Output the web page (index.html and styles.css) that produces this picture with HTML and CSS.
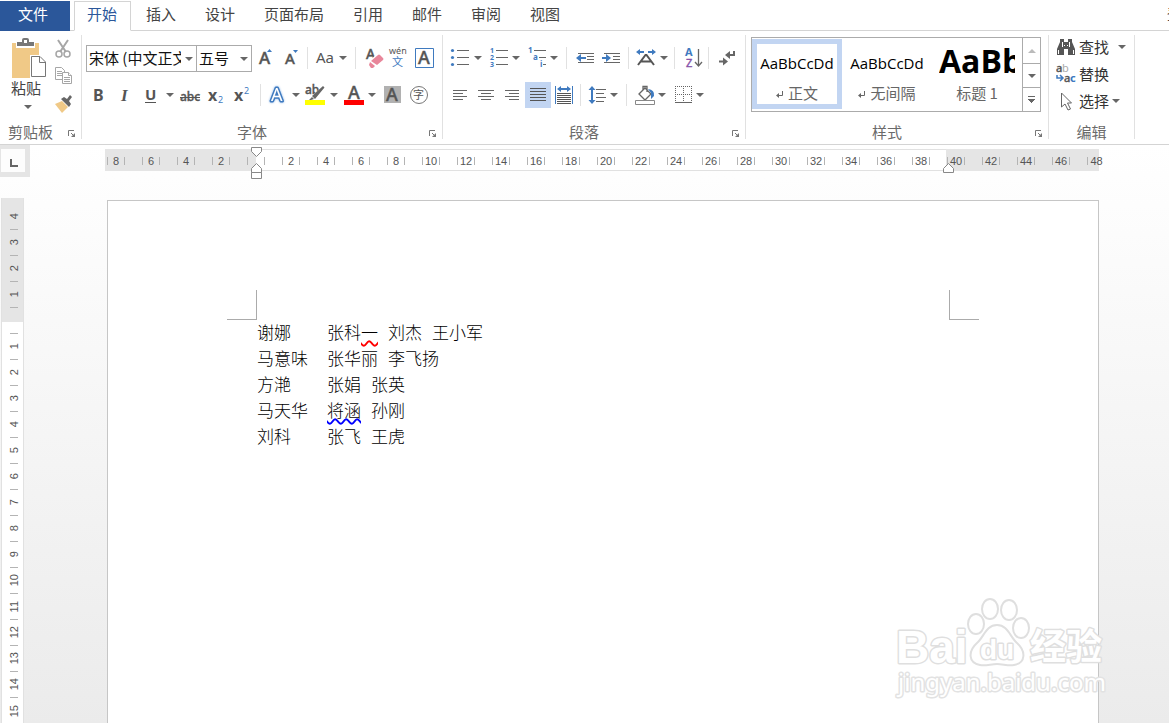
FILE: index.html
```html
<!DOCTYPE html>
<html lang="zh-CN">
<head>
<meta charset="utf-8">
<title>文档</title>
<link rel="stylesheet" href="styles.css">
</head>
<body>
<nav class="tabs" aria-label="功能区选项卡">
  <button class="tab tab-file">文件</button>
  <button class="tab tab-active">开始</button>
  <button class="tab">插入</button>
  <button class="tab">设计</button>
  <button class="tab">页面布局</button>
  <button class="tab">引用</button>
  <button class="tab">邮件</button>
  <button class="tab">审阅</button>
  <button class="tab">视图</button>
  <button class="sign-in">登录</button>
</nav>

<header class="ribbon">
  <section class="group group-clipboard" aria-label="剪贴板">
    <div class="clipboard">
      <button class="paste">
        <svg width="36" height="40" viewBox="0 0 36 40"><path fill="#f0c987" d="M2 5h27v35H2z"/><path fill="#fff" d="M6 3h19v7H6z"/><path fill="#777" d="M7 4h5V2q0-2 2-2h3q2 0 2 2v2h5v4H7z"/><path fill="#fff" d="M14 2h3v3h-3z"/><path fill="#fff" d="M20 17h12l4 5v18H20z"/><path fill="#fff" stroke="#777" d="M21.500 18.500h8.500l5.500 5.500v14.500h-14zM29.500 18.500v6h6"/></svg>
        <span>粘贴</span>
        <i class="caret"></i>
      </button>
      <div class="mini">
        <button class="tool" aria-label="剪切"><svg width="26" height="26" viewBox="0 0 26 26"><g fill="none" stroke="#a6a6a6"><path stroke-width="2" d="M8 5l8 12M18 5l-8 12"/><circle cx="9" cy="19" r="3" stroke-width="1.500"/><circle cx="17" cy="19" r="3" stroke-width="1.500"/></g></svg></button>
        <button class="tool" aria-label="复制"><svg width="26" height="26" viewBox="0 0 26 26"><g fill="#fff" stroke="#a6a6a6"><path d="M5.500 4.500h6l3 3v9h-9z"/><path d="M7 8.500h5M7 10.500h5M7 12.500h5"/><path d="M12.500 9.500h6l3 3v8h-9z"/><path d="M18.500 9.500v3h3M14 14.500h6M14 16.500h6M14 18.500h6"/></g></svg></button>
        <button class="tool" aria-label="格式刷"><svg width="26" height="26" viewBox="0 0 26 26"><path fill="#f0c987" d="M5 13l7-3 6 6-6 6z"/><path fill="#666" d="M11 8l3-2 3 2 3-4 2 2-3 4 2 3-2 3z"/></svg></button>
      </div>
    </div>
    <footer class="group-foot"><span>剪贴板</span><button class="launcher" aria-label="剪贴板设置"><svg width="8" height="8" viewBox="0 0 8 8"><path fill="none" stroke="#777" d="M.5 6V.5H6M3 3l3 3"/><path fill="#777" d="M7 3v4H3z"/></svg></button></footer>
  </section>

  <section class="group group-font" aria-label="字体">
    <div class="rows">
      <div class="row">
        <label class="combo combo-font"><select aria-label="字体"><option>宋体 (中文正文)</option></select></label>
        <label class="combo combo-size"><select aria-label="字号"><option>五号</option></select></label>
        <button class="tool" aria-label="增大字号"><svg width="26" height="26" viewBox="0 0 26 26"><text class="glyph g17" x="7" y="19">A</text><path fill="#3f7abf" d="M15 7l2.500-3L20 7z"/></svg></button>
        <button class="tool" aria-label="减小字号"><svg width="26" height="26" viewBox="0 0 26 26"><text class="glyph g15" x="7" y="19">A</text><path fill="#3f7abf" d="M15 5l2.500 3L20 5z"/></svg></button>
        <i class="sep sep-s"></i>
        <button class="tool" aria-label="更改大小写"><svg width="26" height="26" viewBox="0 0 26 26"><text class="glyph g15 thin" x="6" y="18">Aa</text></svg></button><button class="drop" aria-label="大小写选项"><i class="caret"></i></button>
        <i class="sep"></i>
        <button class="tool" aria-label="清除格式"><svg width="26" height="26" viewBox="0 0 26 26"><text class="glyph g14" x="6" y="14">A</text><path fill="#fff" d="M8 17L18 8l5 5-8 11z"/><path fill="#e8869a" d="M11 16l7-6q1-1 2 0l3 3q1 1 0 2l-6 5z"/><path fill="#e8869a" d="M10 17l5 4-2 2h-2l-2-3z"/></svg></button>
        <button class="tool tool-n" aria-label="拼音指南"><svg width="24" height="26" viewBox="0 0 24 26"><text class="glyph g9 thin" x="3" y="9">wén</text><text class="cjk g11" fill="#3f7abf" x="6" y="21">文</text></svg></button>
        <button class="tool" aria-label="字符边框"><svg width="26" height="26" viewBox="0 0 26 26"><path fill="#fff" stroke="#3f7abf" d="M5.500 3.500h18v19h-18z"/><text class="glyph g18" x="8" y="19">A</text></svg></button>
      </div>
      <div class="row">
        <button class="tool" aria-label="加粗"><svg width="26" height="26" viewBox="0 0 26 26"><text class="glyph g16 bold" x="8" y="19">B</text></svg></button>
        <button class="tool" aria-label="倾斜"><svg width="26" height="26" viewBox="0 0 26 26"><text class="serif g17" x="10" y="19">I</text></svg></button>
        <button class="tool" aria-label="下划线"><svg width="26" height="26" viewBox="0 0 26 26"><text class="glyph g15 bold" x="8" y="18">U</text><path stroke="#555" d="M8 20.500h11"/></svg></button><button class="drop" aria-label="下划线选项"><i class="caret"></i></button>
        <button class="tool" aria-label="删除线"><svg width="26" height="26" viewBox="0 0 26 26"><text class="glyph g12" x="3" y="19">abc</text><path stroke="#555" d="M3 15.500h20"/></svg></button>
        <button class="tool" aria-label="下标"><svg width="26" height="26" viewBox="0 0 26 26"><text class="glyph g16 bold" x="5" y="19">x</text><text class="blue g9" x="15" y="21">2</text></svg></button>
        <button class="tool" aria-label="上标"><svg width="26" height="26" viewBox="0 0 26 26"><text class="glyph g16 bold" x="5" y="19">x</text><text class="blue g9" x="15" y="12">2</text></svg></button>
        <i class="sep"></i>
        <button class="tool tool-n" aria-label="文本效果"><svg width="24" height="26" viewBox="0 0 24 26"><text class="outline g18" x="6" y="19">A</text></svg></button><button class="drop" aria-label="文本效果选项"><i class="caret"></i></button>
        <button class="tool tool-n" aria-label="突出显示"><svg width="24" height="26" viewBox="0 0 24 26"><text class="glyph g12" x="2" y="12">ab</text><path fill="#fff" d="M7 19l3-6L21 3l2 4-8 12z"/><path fill="#666" d="M9 14L20 4l1.500 1.500L12 17zM6 18l3-3 2 2-3 1z"/><path fill="#ff0" d="M2 18h20v5H2z"/></svg></button><button class="drop" aria-label="突出显示颜色"><i class="caret"></i></button>
        <button class="tool tool-n" aria-label="字体颜色"><svg width="24" height="26" viewBox="0 0 24 26"><text class="glyph g18" x="7" y="17">A</text><path fill="red" d="M3 18h20v5H3z"/></svg></button><button class="drop" aria-label="字体颜色选项"><i class="caret"></i></button>
        <button class="tool" aria-label="字符底纹"><svg width="26" height="26" viewBox="0 0 26 26"><path fill="#b1b1b1" d="M5 4h17v17H5z"/><text class="glyph g18" x="7" y="19">A</text></svg></button>
        <button class="tool" aria-label="带圈字符"><svg width="26" height="26" viewBox="0 0 26 26"><circle cx="14" cy="13" r="8.500" fill="none" stroke="#777"/><text class="cjk g11" fill="#555" x="8" y="17">字</text></svg></button>
      </div>
    </div>
    <footer class="group-foot"><span>字体</span><button class="launcher" aria-label="字体设置"><svg width="8" height="8" viewBox="0 0 8 8"><path fill="none" stroke="#777" d="M.5 6V.5H6M3 3l3 3"/><path fill="#777" d="M7 3v4H3z"/></svg></button></footer>
  </section>

  <section class="group group-para" aria-label="段落">
    <div class="rows">
      <div class="row">
        <button class="tool tool-n" aria-label="项目符号"><svg width="24" height="26" viewBox="0 0 24 26"><g fill="#3f7abf"><circle cx="5.500" cy="5.500" r="1.600"/><circle cx="5.500" cy="12.500" r="1.600"/><circle cx="5.500" cy="19.500" r="1.600"/></g><path stroke="#666" d="M10 5.500h12M10 12.500h12M10 19.500h12"/></svg></button><button class="drop" aria-label="项目符号选项"><i class="caret"></i></button>
        <button class="tool tool-n" aria-label="编号"><svg width="24" height="26" viewBox="0 0 24 26"><g class="blue g7 bold"><text x="5" y="8">1</text><text x="5" y="15">2</text><text x="5" y="22">3</text></g><path stroke="#666" d="M11 5.500h12M11 12.500h12M11 19.500h12"/></svg></button><button class="drop" aria-label="编号选项"><i class="caret"></i></button>
        <button class="tool tool-n" aria-label="多级列表"><svg width="24" height="26" viewBox="0 0 24 26"><g class="blue g8 bold"><text x="5" y="8">1</text><text x="10" y="15">a</text><text x="17" y="22">i</text></g><path stroke="#666" d="M11 5.500h12M16 12.500h7M20 19.500h3"/></svg></button><button class="drop" aria-label="多级列表选项"><i class="caret"></i></button>
        <i class="sep"></i>
        <button class="tool" aria-label="减少缩进量"><svg width="26" height="26" viewBox="0 0 26 26"><path stroke="#666" d="M7 8.500h16M16 11.500h7M16 14.500h7M7 17.500h16"/><path fill="#3f7abf" d="M5 13l5-4v3h5v2h-5v3z"/></svg></button>
        <button class="tool" aria-label="增加缩进量"><svg width="26" height="26" viewBox="0 0 26 26"><path stroke="#666" d="M7 8.500h16M16 11.500h7M16 14.500h7M7 17.500h16"/><path fill="#3f7abf" d="M14 13L9 9v3H5v2h4v3z"/></svg></button>
        <i class="sep"></i>
        <button class="tool tool-n" aria-label="中文版式"><svg width="24" height="26" viewBox="0 0 24 26"><path fill="#3f7abf" d="M3 7l4-3v2h4v2H7v2zM23 7l-4-3v2h-4v2h4v2z"/><path fill="none" stroke="#555" stroke-width="2" d="M5 20l7.500-10h1L21 20M8 16.500h10"/></svg></button><button class="drop" aria-label="中文版式选项"><i class="caret"></i></button>
        <i class="sep sep-s"></i>
        <button class="tool" aria-label="排序"><svg width="26" height="26" viewBox="0 0 26 26"><text class="blue g11 bold" x="8" y="11">A</text><text class="g11" fill="#8651a8" stroke="#8651a8" stroke-width=".4" x="9" y="22">Z</text><path fill="none" stroke="#666" stroke-width="1.300" d="M21.500 4v17M18 17l3.500 4 3.500-4"/></svg></button>
        <i class="sep"></i>
        <button class="tool" aria-label="显示编辑标记"><svg width="26" height="26" viewBox="0 0 26 26"><path fill="none" stroke="#666" stroke-width="2" d="M21 6v4h-5M6 16.500h5"/><path fill="#666" d="M12 10l5-4v8zM15 16.500l-5-4v8z"/></svg></button>
      </div>
      <div class="row">
        <button class="tool" aria-label="左对齐"><svg width="26" height="26" viewBox="0 0 26 26"><path stroke="#666" d="M6 8.500h14M6 11.500h10M6 14.500h14M6 17.500h10"/></svg></button>
        <button class="tool" aria-label="居中"><svg width="26" height="26" viewBox="0 0 26 26"><path stroke="#666" d="M5 8.500h16M8 11.500h10M5 14.500h16M8 17.500h10"/></svg></button>
        <button class="tool" aria-label="右对齐"><svg width="26" height="26" viewBox="0 0 26 26"><path stroke="#666" d="M6 8.500h14M10 11.500h10M6 14.500h14M10 17.500h10"/></svg></button>
        <button class="tool tool-on" aria-label="两端对齐" aria-pressed="true"><svg width="26" height="26" viewBox="0 0 26 26"><path stroke="#555" d="M5 6.500h16M5 9.500h16M5 12.500h16M5 15.500h16M5 18.500h16"/></svg></button>
        <button class="tool" aria-label="分散对齐"><svg width="26" height="26" viewBox="0 0 26 26"><path stroke="#3f7abf" d="M4.500 4v18M21.500 4v18"/><path fill="#3f7abf" d="M6 7l4-3v2h6V4l4 3-4 3V8h-6v2z"/><path stroke="#555" d="M6 11.500h14M6 13.500h14M6 15.500h14M6 17.500h14M6 19.500h14M6 21.500h14"/></svg></button>
        <i class="sep sep-s"></i>
        <button class="tool tool-n" aria-label="行距"><svg width="24" height="26" viewBox="0 0 24 26"><path fill="#3f7abf" d="M9 4l3.500 4H10v10h2.500L9 22l-3.500-4H8V8H5.500z"/><path stroke="#666" d="M13 7.500h10M13 11.500h8M13 15.500h10M13 19.500h8"/></svg></button><button class="drop" aria-label="行距选项"><i class="caret"></i></button>
        <i class="sep"></i>
        <button class="tool tool-n" aria-label="底纹"><svg width="24" height="26" viewBox="0 0 24 26"><path fill="#fff" stroke="#666" stroke-width="1.300" d="M8 12l6-6 6 6-6 6zM12 8V4.500h4V10"/><path fill="#3f7abf" d="M17 7q7 1 6 7l-3 3V11z"/><path fill="#fff" stroke="#888" d="M4.500 18.500h19v4h-19z"/></svg></button><button class="drop" aria-label="底纹颜色"><i class="caret"></i></button>
        <button class="tool tool-n" aria-label="边框"><svg width="24" height="26" viewBox="0 0 24 26"><path fill="none" stroke="#666" stroke-dasharray="1 1" d="M6 4.500h17M6 12.500h17M6.500 4v17M14.500 4v17M22.500 4v17"/><path stroke="#666" d="M6 20.500h17"/></svg></button><button class="drop" aria-label="边框选项"><i class="caret"></i></button>
      </div>
    </div>
    <footer class="group-foot"><span>段落</span><button class="launcher" aria-label="段落设置"><svg width="8" height="8" viewBox="0 0 8 8"><path fill="none" stroke="#777" d="M.5 6V.5H6M3 3l3 3"/><path fill="#777" d="M7 3v4H3z"/></svg></button></footer>
  </section>

  <section class="group group-styles" aria-label="样式">
    <div class="gallery">
      <button class="style style-on"><span class="sample">AaBbCcDd</span><span class="style-name"><svg width="8" height="8" viewBox="0 0 8 8"><path fill="none" stroke="#666" d="M6.500 0v4.500H2"/><path fill="#666" d="M0 4.500L3 2v5z"/></svg>正文</span></button>
      <button class="style"><span class="sample">AaBbCcDd</span><span class="style-name"><svg width="8" height="8" viewBox="0 0 8 8"><path fill="none" stroke="#666" d="M6.500 0v4.500H2"/><path fill="#666" d="M0 4.500L3 2v5z"/></svg>无间隔</span></button>
      <button class="style"><span class="sample sample-h1">AaBb</span><span class="style-name">标题 1</span></button>
      <div class="gallery-nav">
        <button aria-label="上一行" disabled><i class="caret caret-up"></i></button>
        <button aria-label="下一行"><i class="caret"></i></button>
        <button aria-label="其他"><i class="caret caret-more"></i></button>
      </div>
    </div>
    <footer class="group-foot"><span>样式</span><button class="launcher" aria-label="样式设置"><svg width="8" height="8" viewBox="0 0 8 8"><path fill="none" stroke="#777" d="M.5 6V.5H6M3 3l3 3"/><path fill="#777" d="M7 3v4H3z"/></svg></button></footer>
  </section>

  <section class="group group-edit" aria-label="编辑">
    <div class="edit-list">
      <button class="edit"><svg width="20" height="20" viewBox="0 0 20 20"><path fill="#555" d="M4 2h4v3h4V2h4v3l3 7v6h-7v-6H8v6H1v-6l3-7z"/><path stroke="#fff" d="M6.500 5v5M13.500 5v5M2.500 13v4M17.500 13v4M8 8.500h1M11 8.500h1"/></svg>查找<i class="caret caret-far"></i></button>
      <button class="edit"><svg width="20" height="20" viewBox="0 0 20 20"><text class="glyph g11" x="0" y="8">a</text><text class="g11" fill="#aaa" x="6" y="8">b</text><text class="glyph g11" x="8" y="18">a</text><text class="blue g11 bold" x="14" y="18">c</text><path fill="none" stroke="#3f7abf" stroke-width="1.500" d="M1 11v3h5M4 11l3 3-3 3"/></svg>替换</button>
      <button class="edit"><svg width="20" height="20" viewBox="0 0 20 20"><path fill="#fff" stroke="#666" d="M5.500 2v14l3.500-3 3 6 2.500-1-3-6h4z"/></svg>选择<i class="caret"></i></button>
    </div>
    <footer class="group-foot"><span>编辑</span></footer>
  </section>
</header>

<main class="workspace">
  <div class="corner"><button class="tab-stop" aria-label="制表符"><svg width="8" height="8" viewBox="0 0 8 8"><path fill="none" stroke="#666" stroke-width="2" d="M1 0v7h7"/></svg></button></div>
  <div class="ruler">
    <div class="ruler-bands"><i></i><i></i><i></i></div>
    <ol class="ruler-marks"><li>8</li><li>6</li><li>4</li><li>2</li><li></li><li>2</li><li>4</li><li>6</li><li>8</li><li>10</li><li>12</li><li>14</li><li>16</li><li>18</li><li>20</li><li>22</li><li>24</li><li>26</li><li>28</li><li>30</li><li>32</li><li>34</li><li>36</li><li>38</li><li>40</li><li>42</li><li>44</li><li>46</li><li class="last">48</li></ol>
    <svg class="indent-left" width="12" height="33" viewBox="0 0 12 33"><g fill="#fff" stroke="#888"><path d="M.5.500h10v4l-5 5-5-5zM.5 25.500v-4l5-5 5 5v4zM.5 25.500h10v6H.5z"/></g></svg>
    <svg class="indent-right" width="12" height="11" viewBox="0 0 12 11"><path fill="#fff" stroke="#888" d="M.5 9.500v-4l5-5 5 5v4z"/></svg>
  </div>
  <div class="vruler">
    <ol class="vmarks vmarks-margin"><li>4</li><li>3</li><li>2</li><li>1</li></ol>
    <ol class="vmarks"><li></li><li>1</li><li>2</li><li>3</li><li>4</li><li>5</li><li>6</li><li>7</li><li>8</li><li>9</li><li>10</li><li>11</li><li>12</li><li>13</li><li>14</li><li>15</li></ol>
  </div>
  <article class="page">
    <div class="crops"><i class="crop crop-l"></i><i class="crop crop-r"></i></div>
    <div class="text">
      <p><span class="lead">谢娜</span><span>张科<u class="spell">一</u></span><span>刘杰</span><span>王小军</span></p>
      <p><span class="lead">马意味</span><span>张华丽</span><span>李飞扬</span></p>
      <p><span class="lead">方滟</span><span>张娟</span><span>张英</span></p>
      <p><span class="lead">马天华</span><span><u class="grammar">将涵</u></span><span>孙刚</span></p>
      <p><span class="lead">刘科</span><span>张飞</span><span>王虎</span></p>
    </div>
  </article>
  <svg class="watermark" width="214" height="104" viewBox="0 0 214 104" role="img" aria-label="Baidu 经验">
    <g class="wm">
      <text class="wm-bai" x="1" y="65">Bai</text>
      <ellipse cx="81" cy="26" rx="8" ry="10"/>
      <ellipse cx="95" cy="11" rx="8" ry="10"/>
      <ellipse cx="114" cy="12" rx="8" ry="10"/>
      <ellipse cx="126" cy="30" rx="8" ry="10"/>
      <path d="M102 27c11 0 13 12 20 18 9 8 9 20-3 22-6 1-11-1-17-1s-11 2-17 1c-12-2-12-14-3-22 7-6 9-18 20-18z"/>
      <text class="wm-du" x="85" y="61">du</text>
      <text class="wm-jy" x="135" y="62">经验</text>
      <text class="wm-url" x="3" y="93">jingyan.baidu.com</text>
    </g>
  </svg>
</main>
</body>
</html>
```

FILE: styles.css
```css
* { box-sizing: border-box; }

body {
  margin: 0;
  min-height: 100vh;
  display: flex;
  flex-direction: column;
  overflow: hidden;
  background: #fff;
  color: #444;
  font: 15px/20px "Noto Sans CJK SC", "Noto Sans", sans-serif;
}

button {
  margin: 0;
  padding: 0;
  border: 0;
  background: none;
  color: inherit;
  font: inherit;
}

svg { display: block; }
ol { margin: 0; padding: 0; list-style: none; }

/* Tabs */
.tabs {
  display: flex;
  gap: 3px;
  height: 31px;
  padding-top: 1px;
  border-bottom: 1px solid #d4d4d4;
}
.tab {
  height: 29px;
  padding: 0 12px 4px;
  border: 1px solid transparent;
  white-space: nowrap;
}
.tab-file {
  width: 70px;
  height: 30px;
  margin-right: 1px;
  padding-right: 16px;
  background: #2b579a;
  color: #fff;
}
.tab-active {
  height: 30px;
  padding-right: 13px;
  margin-right: -1px;
  border-color: #d4d4d4;
  border-bottom-color: #fff;
  background: #fff;
  color: #2b579a;
}
.sign-in {
  width: 2px;
  height: 26px;
  margin-left: auto;
  overflow: hidden;
  text-align: left;
  white-space: nowrap;
}

/* Ribbon */
.ribbon {
  display: flex;
  height: 114px;
  padding: 4px 0 5px;
  border-bottom: 1px solid #d4d4d4;
}
.group {
  display: flex;
  flex-direction: column;
  justify-content: space-between;
  flex: none;
  border-right: 1px solid #e1e1e1;
}
.group-clipboard { width: 82px; }
.group-font { width: 361px; }
.group-font .rows { padding-left: 3px; }
.group-para { width: 303px; }
.group-para .rows { padding-left: 4px; }
.group-styles { width: 303px; }
.group-edit { width: 86px; }

.group-foot {
  display: flex;
  align-items: center;
  height: 14px;
  color: #6a6a6a;
  line-height: 14px;
}
.group-foot span { flex: 1; text-align: center; }
.launcher { width: 20px; padding: 4px 5px 0 7px; }

.caret {
  display: block;
  width: 0;
  height: 0;
  border: 4px solid transparent;
  border-top-color: #666;
  border-bottom: 0;
}
.caret-up {
  border-top: 0;
  border-bottom: 4px solid #bbb;
}
.caret-more {
  width: 7px;
  height: 7px;
  border: 0;
  background:
    linear-gradient(#666, #666) 0 0 / 7px 1px no-repeat,
    linear-gradient(#666, #666) 0 3px / 7px 1px no-repeat,
    linear-gradient(#666, #666) 1px 4px / 5px 1px no-repeat,
    linear-gradient(#666, #666) 2px 5px / 3px 1px no-repeat,
    linear-gradient(#666, #666) 3px 6px / 1px 1px no-repeat;
}

.clipboard { display: flex; }
.paste {
  display: flex;
  flex-direction: column;
  align-items: center;
  width: 52px;
  padding-top: 3px;
}
.paste svg { margin-left: 4px; }
.paste .caret { margin-top: 7px; margin-left: 4px; }
.mini { display: flex; flex-direction: column; gap: 2px; margin-left: -2px; }

.rows {
  display: flex;
  flex-direction: column;
  gap: 11px;
  padding-top: 10px;
}
.row { display: flex; align-items: center; height: 26px; }
.tool { width: 26px; height: 26px; flex: none; }
.tool-n { width: 24px; }
.tool-on { background: #c2d5f2; }
.drop {
  display: flex;
  align-items: center;
  justify-content: center;
  width: 14px;
  height: 26px;
}
.sep {
  width: 10px;
  height: 22px;
  background: linear-gradient(#e1e1e1, #e1e1e1) center / 1px 100% no-repeat;
}
.sep-s { width: 6px; }

.combo { position: relative; height: 27px; }
.combo select {
  width: 100%;
  height: 27px;
  padding: 0 15px 0 2px;
  appearance: none;
  border: 1px solid #ababab;
  border-radius: 0;
  background: #fff;
  color: #111;
  font: inherit;
}
.combo::after {
  content: "";
  position: absolute;
  top: 12px;
  right: 4px;
  border: 4px solid transparent;
  border-top-color: #666;
  border-bottom: 0;
}
.combo-font { width: 111px; margin-left: 1px; }
.combo-size { width: 56px; margin-left: -1px; }

/* Lettering inside icons */
svg text { font-family: "Noto Sans", sans-serif; }
svg text.cjk { font-family: "Noto Sans CJK SC", sans-serif; }
.glyph { fill: #555; font-weight: 500; stroke: #555; stroke-width: 0.4; }
.thin { stroke: none; font-weight: 400; }
.bold { font-weight: 700; stroke: none; }
.blue { fill: #3f7abf; }
svg text.serif { font-family: "Liberation Serif", serif; font-style: italic; font-weight: 700; fill: #555; }
.outline {
  fill: #fff;
  stroke: #3f7abf;
  stroke-width: 3;
  stroke-linejoin: round;
  paint-order: stroke;
  filter: drop-shadow(0 0 1px #8db8ea);
}
.g7 { font-size: 7px; }
.g8 { font-size: 8px; }
.g9 { font-size: 9px; }
.g11 { font-size: 11px; }
.g12 { font-size: 12px; }
.g14 { font-size: 14px; }
.g15 { font-size: 15px; }
.g16 { font-size: 16px; }
.g17 { font-size: 17px; }
.g18 { font-size: 18px; }

/* Style gallery */
.gallery {
  display: flex;
  width: 290px;
  height: 75px;
  margin: 2px 0 0 5px;
  border: 1px solid #ababab;
}
.style {
  display: flex;
  flex-direction: column;
  align-items: center;
  justify-content: space-between;
  width: 90px;
  height: 70px;
  margin-top: 1px;
  padding: 6px 0 7px;
  color: #666;
}
.style-on { box-shadow: inset 0 0 0 5px #c2d5f2; }
.sample {
  width: 76px;
  height: 36px;
  overflow: hidden;
  color: #000;
  font: 15px/36px "Open Sans", sans-serif;
  text-align: center;
  white-space: nowrap;
}
.sample-h1 { font-size: 32px; font-weight: 700; line-height: 32px; text-align: left; }
.style-name { display: flex; align-items: center; gap: 4px; line-height: 18px; }
.style-name svg { margin-top: 4px; }
.gallery-nav {
  display: grid;
  grid-template-rows: 25px 24px 24px;
  width: 18px;
  border-left: 1px solid #ababab;
}
.gallery-nav button { display: grid; place-items: center; }
.gallery-nav button + button { border-top: 1px solid #ababab; }

.edit-list { display: flex; flex-direction: column; gap: 7px; padding: 2px 0 0 7px; }
.edit { display: flex; align-items: center; height: 20px; gap: 3px; color: #333; }
.edit .caret-far { margin-left: 6px; }

/* Document area */
.workspace {
  position: relative;
  flex: 1;
  display: grid;
  grid-template-columns: 105px 1fr 70px;
  grid-template-rows: 53px 1fr;
  background: linear-gradient(#fff 0, #fdfdfd 60px, #ebebeb 100%);
}
.corner {
  width: 30px;
  height: 32px;
  padding: 4px 0 0 1px;
  background: #e5e5e5;
}
.tab-stop {
  display: grid;
  place-items: center;
  width: 24px;
  height: 23px;
  padding: 4px 0 0 2px;
  background: #fdfdfd;
}

.ruler {
  position: relative;
  display: grid;
  height: 22px;
  margin-top: 4px;
}
.ruler-bands, .ruler-marks { grid-area: 1 / 1; min-width: 0; }
.ruler-bands { display: grid; grid-template-columns: 151px 1fr 153px; }
.ruler-bands i { background: #e5e5e5; }
.ruler-bands i:nth-child(2) {
  border: solid #e1e1e1;
  border-width: 1px 0;
  background: #fff;
}
.ruler-marks { display: flex; padding: 8px 0 0 2px; width: 0; }
.ruler-marks li {
  flex: none;
  width: 18px;
  height: 8px;
  margin-right: 17px;
  border: solid #b4b4b4;
  border-width: 0 1px;
  color: #555;
  font: 11px/9px "Liberation Sans", sans-serif;
  text-align: center;
}
.ruler-marks .last { border-right: 0; }
.indent-left { position: absolute; top: -2px; left: 146px; }
.indent-right { position: absolute; top: 14px; right: 144px; }

.vruler {
  grid-row: 2;
  grid-column: 1;
  width: 23px;
  margin-left: 1px;
  border: solid #e1e1e1;
  border-width: 0 1px;
  background: #fff;
}
.vmarks-margin { height: 124px; padding-top: 6px; background: #e5e5e5; }
.vmarks li {
  display: flex;
  align-items: center;
  justify-content: center;
  width: 8px;
  height: 26px;
  margin-left: 8px;
  border-bottom: 1px solid #b4b4b4;
  color: #555;
  font: 11px/8px "Liberation Sans", sans-serif;
  writing-mode: sideways-lr;
}
.vmarks li:empty { height: 12px; }
.vmarks li:last-child { border-bottom: 0; }
.vmarks-margin li:last-child { border-bottom: 1px solid #b4b4b4; }

.page {
  grid-row: 2;
  grid-column: 2;
  margin: 2px 0 0 2px;
  padding: 89px 119px 0;
  border: 1px solid #c6c6c6;
  border-bottom: 0;
  background: #fff;
}
.crops { display: flex; justify-content: space-between; }
.crop { width: 30px; height: 30px; border: 0 solid #ababab; border-bottom-width: 1px; }
.crop-l { border-right-width: 1px; }
.crop-r { border-left-width: 1px; }

.text {
  padding: 1px 0 0 30px;
  color: #000;
  font: 300 17px/26px "Liberation Serif", "Noto Sans CJK SC", serif;
}
.text p { display: flex; gap: 10px; margin: 0; }
.lead { width: 60px; }
.text u { text-decoration: underline wavy 2px; text-underline-offset: 1px; text-decoration-skip-ink: none; }
.text .spell { text-decoration-color: red; }
.text .grammar { text-decoration-color: blue; }

.watermark { position: absolute; right: 60px; bottom: 22px; overflow: visible; }
.wm { fill: #fff; stroke: #dfdfdf; stroke-width: 2; stroke-linejoin: round; }
.wm text { paint-order: stroke; stroke-width: 3; }
.wm .wm-bai { font: 700 46px "Liberation Sans", sans-serif; }
.wm .wm-du { font: 700 28px "Liberation Sans", sans-serif; }
.wm .wm-jy { font: 700 36px "Noto Sans CJK SC", sans-serif; }
.wm .wm-url { font: 400 24px "Noto Sans", sans-serif; stroke: #e2e2e2; }
```
